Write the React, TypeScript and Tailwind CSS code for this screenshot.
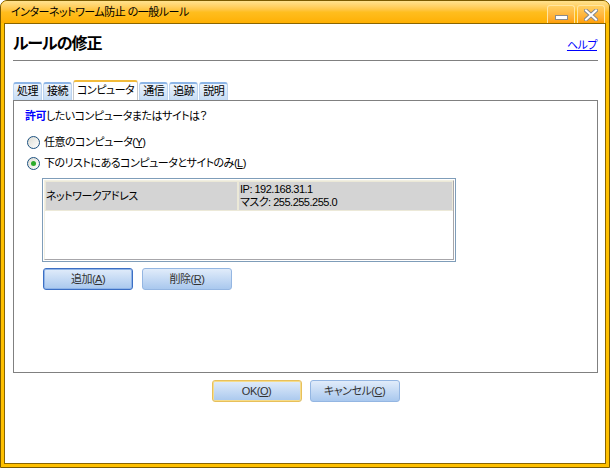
import React from 'react';

const tabs = ['処理', '接続', 'コンピュータ', '通信', '追跡', '説明'];

const Acc: React.FC<{ label: string; k: string }> = ({ label, k }) => (
  <span>
    {label}(<span className="underline">{k}</span>)
  </span>
);

const Radio: React.FC<{ checked?: boolean }> = ({ checked }) => (
  <span className="w-[13px] h-[13px] rounded-full border border-[#1c5180] bg-gradient-to-br from-[#dcdcd4] to-white flex items-center justify-center shrink-0">
    {checked && <span className="w-[5px] h-[5px] rounded-full bg-[#2cab2c]" />}
  </span>
);

const XpButton: React.FC<{ children: React.ReactNode; kind?: 'focus' | 'default' }> = ({
  children,
  kind,
}) => {
  const ring =
    kind === 'focus'
      ? 'border-[#3c6fc4] shadow-[inset_0_0_0_1px_#8fb4e8]'
      : kind === 'default'
        ? 'border-[#e8c05a] shadow-[inset_0_0_0_1px_#f5dc8c]'
        : 'border-[#94b6e2]';
  return (
    <button
      className={`h-[22px] w-[90px] rounded-[3px] border bg-gradient-to-b from-[#e1ecfa] to-[#a9c8ee] text-[11px] text-[#333] flex items-center justify-center ${ring}`}
    >
      {children}
    </button>
  );
};

export default function App() {
  return (
    <div className="w-[610px] h-[468px] flex flex-col bg-[#ffc000] border border-[#7b5a00] rounded-t-[7px] overflow-hidden font-['Liberation_Sans','Noto_Sans_CJK_JP',sans-serif] [font-feature-settings:'palt'] text-[11px] tracking-[-0.5px] text-black">
      {/* Title bar */}
      <div className="h-[22px] shrink-0 flex items-center justify-between bg-gradient-to-b from-[#ffe28e] via-[#ffbe1e] to-[#ffb000] pl-[10px] pr-[4px]">
        <span className="leading-none">インターネットワーム防止 の一般ルール</span>
        <div className="self-end flex gap-[2px]">
          <div className="w-[28px] h-[18px] rounded-t-[3px] border border-b-0 border-[#ffe6a0] bg-gradient-to-b from-[#ffcf60] to-[#ff9f00] flex items-end justify-center pb-[3px]">
            <span className="w-[13px] h-[5px] bg-white border border-[#8a8a8a]" />
          </div>
          <div className="w-[28px] h-[18px] rounded-t-[3px] border border-b-0 border-[#ffe6a0] bg-gradient-to-b from-[#ffcf60] to-[#ff9f00] flex items-center justify-center">
            <svg width="14" height="12" viewBox="0 0 14 12">
              <path d="M2 1.5 L12 10.5 M12 1.5 L2 10.5" stroke="#8a8a8a" strokeWidth="4" strokeLinecap="square" />
              <path d="M2 1.5 L12 10.5 M12 1.5 L2 10.5" stroke="#ffffff" strokeWidth="2" strokeLinecap="square" />
            </svg>
          </div>
        </div>
      </div>

      {/* Client */}
      <div className="flex-1 mx-[3px] mb-[3px] border border-[#8a6500] bg-white flex flex-col pl-[8px] pr-[7px]">
        <div className="pt-[10px] flex items-end justify-between">
          <h1 className="h-[20px] text-[16px] leading-[20px] tracking-[-1px] font-bold">ルールの修正</h1>
          <a className="leading-[14px] text-[#0000ff] underline mb-[2px] mr-[1px]">ヘルプ</a>
        </div>
        <div className="mt-[6px] h-px bg-[#808080]" />

        {/* Tabs */}
        <div className="mt-[19px] h-[20px] flex items-end gap-[1px]">
          {tabs.map((t, i) =>
            i === 2 ? (
              <div
                key={t}
                className="h-[20px] px-[3px] rounded-t-[3px] border-t-2 border-x border-[#f2bb3a] border-x-[#c8c8c8] bg-white leading-[17px]"
              >
                {t}
              </div>
            ) : (
              <div
                key={t}
                className="h-[18px] px-[3px] rounded-t-[3px] border-t-2 border-x border-t-[#8db5e6] border-x-[#bcd3ef] bg-gradient-to-b from-[#eef4fc] to-[#c6dcf5] leading-[15px]"
              >
                {t}
              </div>
            )
          )}
        </div>

        {/* Panel */}
        <div className="h-[273px] border border-[#808080] pl-[11px] pt-[8px] flex flex-col">
          <div className="leading-[14px]">
            <span className="text-[#0000ff] font-bold">許可</span>したいコンピュータまたはサイトは？
          </div>
          <div className="mt-[12px] ml-[2px] h-[14px] flex items-center gap-[4px]">
            <Radio />
            <span>
              任意のコンピュータ(<span className="underline">Y</span>)
            </span>
          </div>
          <div className="mt-[7px] ml-[2px] h-[14px] flex items-center gap-[4px]">
            <Radio checked />
            <span>
              下のリストにあるコンピュータとサイトのみ(<span className="underline">L</span>)
            </span>
          </div>

          {/* List */}
          <div className="mt-[8px] ml-[17px] w-[414px] h-[84px] border border-[#7f9db9] bg-white p-px">
            <div className="h-full border border-[#f1efe2] border-r-[#a7a6aa] border-b-[#a7a6aa]">
              <div className="h-[30px] flex gap-[2px] bg-[#ece9d8] p-px">
                <div className="w-[191px] bg-[#d4d4d4] flex items-center">ネットワークアドレス</div>
                <div className="flex-1 bg-[#d4d4d4] flex flex-col justify-center pl-[1px] leading-[13px]">
                  <span>IP: 192.168.31.1</span>
                  <span>マスク: 255.255.255.0</span>
                </div>
              </div>
            </div>
          </div>

          <div className="mt-[6px] ml-[18px] flex gap-[9px]">
            <XpButton kind="focus">
              <Acc label="追加" k="A" />
            </XpButton>
            <XpButton>
              <Acc label="削除" k="R" />
            </XpButton>
          </div>
        </div>

        {/* Bottom buttons */}
        <div className="mt-[7px] flex justify-center gap-[8px]">
          <XpButton kind="default">
            <Acc label="OK" k="O" />
          </XpButton>
          <XpButton>
            <Acc label="キャンセル" k="C" />
          </XpButton>
        </div>
      </div>
    </div>
  );
}
